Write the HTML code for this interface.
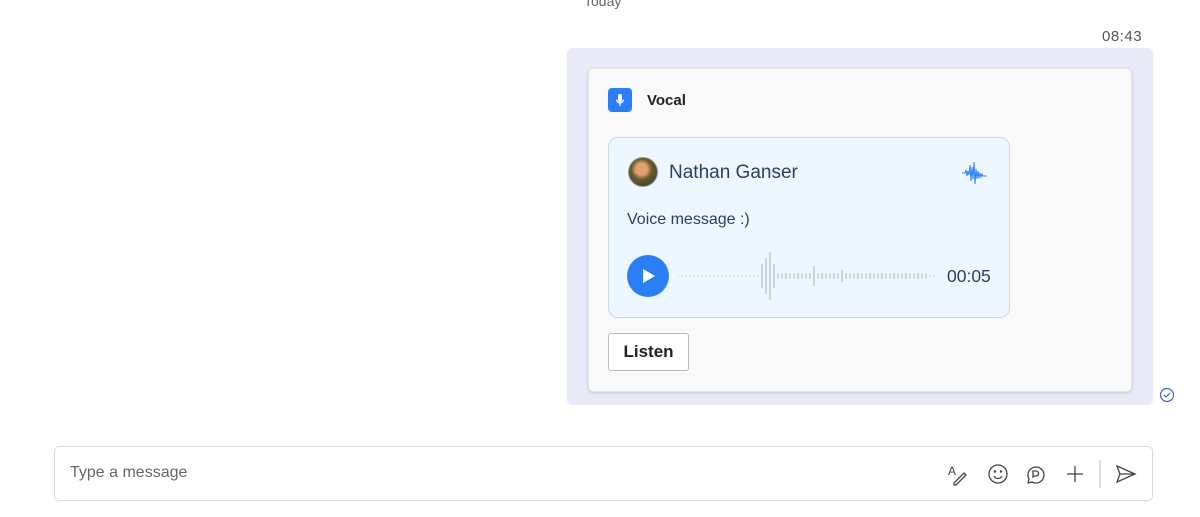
<!DOCTYPE html>
<html><head><meta charset="utf-8"><style>
*{box-sizing:border-box;margin:0;padding:0}
body{width:1200px;height:517px;background:#fff;font-family:"Liberation Sans",sans-serif;position:relative;overflow:hidden}
.abs{position:absolute}
</style></head><body>
<div class="abs" style="left:584px;top:-7px;font-size:14px;color:#666">Today</div>
<div class="abs" style="left:1102px;top:28px;font-size:15px;color:#555;letter-spacing:0.5px">08:43</div>
<div class="abs" style="left:567px;top:48px;width:586px;height:357px;background:#e8eaf8;border-radius:5px"></div>
<div class="abs" style="left:588px;top:68px;width:544px;height:324px;background:#f9f9f9;border:1px solid #e2e2e6;border-radius:5px;box-shadow:0 1px 3px rgba(0,0,0,0.15)"></div>
<div class="abs" style="left:608px;top:88px;width:24px;height:24px;background:#2b7ff6;border-radius:4px">
<svg width="24" height="24" viewBox="0 0 24 24"><rect x="10" y="6" width="4" height="8" rx="2" fill="#fff"/><path d="M8.5 11.5a3.5 3.5 0 0 0 7 0M12 15v3" stroke="#fff" stroke-width="1.2" fill="none"/></svg></div>
<div class="abs" style="left:647px;top:92px;font-size:15px;font-weight:bold;color:#222">Vocal</div>
<div class="abs" style="left:608px;top:137px;width:402px;height:181px;background:#eef7ff;border:1px solid #c9d9ea;border-radius:10px"></div>
<div class="abs" style="left:628px;top:157px;width:30px;height:30px;border-radius:50%;background:radial-gradient(circle at 45% 40%,#e0a070 0 25%,#6b5a2e 45%,#3c4a30 80%);border:1px solid #999"></div>
<div class="abs" style="left:669px;top:162px;font-size:19px;color:#2c3e66">Nathan Ganser</div>
<svg class="abs" style="left:962px;top:158px" width="31" height="30" viewBox="0 0 31 30"><path d="M0 15h3l1-3 1 6 1-5 1 4 1-10 1 16 1-14 1 12 1-17 1 22 1-15 1 10 1-8 1 7 1-5 1 4 1-3 1 2h4" stroke="#2b7ff6" stroke-width="1" fill="none"/></svg>
<div class="abs" style="left:627px;top:211px;font-size:16px;color:#2c3e66">Voice message :)</div>
<div class="abs" style="left:627px;top:255px;width:42px;height:42px;border-radius:50%;background:#2b7ff6"><svg width="42" height="42"><path d="M16 14l12 7-12 7z" fill="#fff"/></svg></div>
<svg class="abs" id="wv" style="left:678px;top:252px" width="260" height="48"></svg>
<div class="abs" style="left:947px;top:266px;font-size:17.5px;color:#2c3e66">00:05</div>
<div class="abs" style="left:608px;top:333px;width:81px;height:38px;border:1px solid #bbb;border-radius:3px;background:#fff;font-size:17px;font-weight:bold;color:#222;text-align:center;line-height:36px">Listen</div>
<svg class="abs" style="left:1159px;top:387px" width="16" height="16"><circle cx="8" cy="8" r="6.5" stroke="#4a5bc9" stroke-width="1.2" fill="none"/><path d="M5 8l2 2 4-4" stroke="#4a5bc9" stroke-width="1.2" fill="none"/></svg>
<div class="abs" style="left:54px;top:446px;width:1099px;height:55px;border:1px solid #d8d8d8;border-radius:5px;background:#fff"></div>
<div class="abs" style="left:70px;top:464px;font-size:16px;color:#666">Type a message</div>
<svg class="abs" style="left:940px;top:455px" width="200" height="38" viewBox="0 0 200 38" fill="none" stroke="#444" stroke-width="1.3">
<text x="8" y="20" font-size="12" fill="#444" stroke="none" font-family="Liberation Sans">A</text>
<path d="M14 28l10-10 2 2-10 10h-2z"/>
<circle cx="58" cy="19" r="9"/><circle cx="55" cy="16.5" r=".6" fill="#444"/><circle cx="61" cy="16.5" r=".6" fill="#444"/><path d="M54 21a4.5 4.5 0 0 0 8 0"/>
<path d="M88 28l1-4a8 8 0 1 1 3 3z"/><path d="M93 23v-7h3a2 2 0 0 1 0 5h-3"/>
<path d="M135 11v16M127 19h16"/>
<path d="M160 5v28" stroke="#ccc"/>
<path d="M177 11l18 8-18 8 3-8z M180 19h15"/>
</svg>
<script>
var s=document.getElementById('wv'),h='';
var big={84:12,88:18,92:24,96:12,136:10,164:6,210:6};
for(var x=0;x<260;x+=4){var l=big[x]||( x>96&&x<250?(x%12==0?3:2.5):0.6);h+='<line x1="'+x+'" x2="'+x+'" y1="'+(24-l)+'" y2="'+(24+l)+'" stroke="'+(l<1?'#b8c0cc':'#a8b2c2')+'" stroke-width="1"/>';}
s.innerHTML=h;
</script>
</body></html>
